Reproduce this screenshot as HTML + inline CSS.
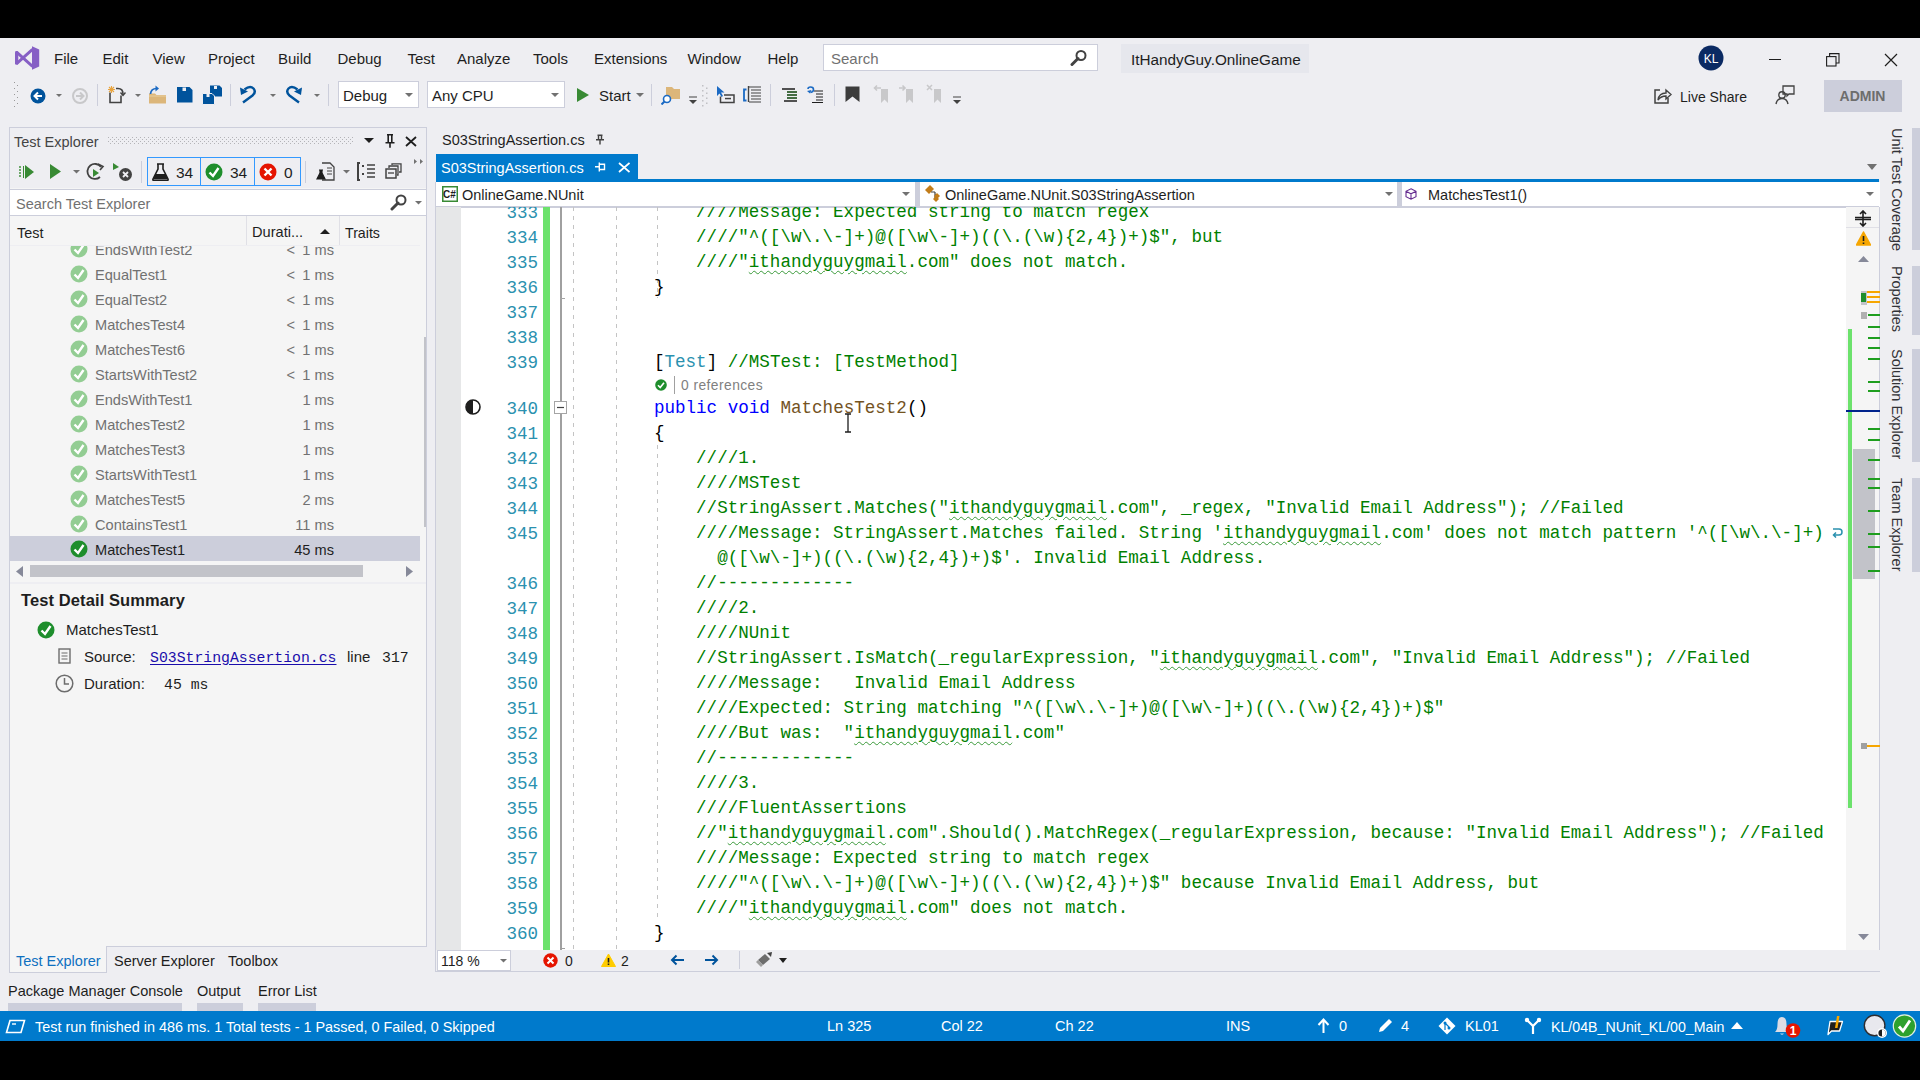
<!DOCTYPE html>
<html><head><meta charset="utf-8"><title>VS</title><style>
*{margin:0;padding:0;box-sizing:content-box}
html,body{width:1920px;height:1080px;overflow:hidden;background:#EEEEF2;position:relative}
.r{position:absolute;display:block}
.t{position:absolute;white-space:pre}
.s{font-family:"Liberation Sans", sans-serif}
.m{font-family:"Liberation Mono", monospace}
.code{font-size:17.57px;line-height:23px}
.sq{text-decoration:underline wavy #3A9A3A;text-decoration-thickness:1px;text-underline-offset:2.5px}
</style></head><body>
<div class="r" style="left:0px;top:0px;width:1920px;height:38px;background:#000;"></div>
<div class="r" style="left:0px;top:38px;width:1920px;height:973px;background:#EEEEF2;"></div>
<div class="r" style="left:0px;top:1011px;width:1920px;height:30px;background:#007ACC;"></div>
<div class="r" style="left:0px;top:1041px;width:1920px;height:39px;background:#000;"></div>
<svg class="r" style="left:15px;top:46px;" width="25" height="24" viewBox="0 0 25 24"><path d="M17 0.3L24.2 3.6V20.4L17 23.7Z" fill="#865FC5"/><rect x="0" y="5" width="3.3" height="13.8" rx="1.4" fill="#865FC5"/><path d="M1.6 6.2L17.5 20.3M1.6 17.6L17.5 3.4" stroke="#865FC5" stroke-width="2.9"/></svg>
<div class="t s" style="left:54px;top:48.80px;font-size:15px;line-height:20px;color:#1E1E1E;font-weight:400;">File</div>
<div class="t s" style="left:102.5px;top:48.80px;font-size:15px;line-height:20px;color:#1E1E1E;font-weight:400;">Edit</div>
<div class="t s" style="left:152.5px;top:48.80px;font-size:15px;line-height:20px;color:#1E1E1E;font-weight:400;">View</div>
<div class="t s" style="left:208px;top:48.80px;font-size:15px;line-height:20px;color:#1E1E1E;font-weight:400;">Project</div>
<div class="t s" style="left:278px;top:48.80px;font-size:15px;line-height:20px;color:#1E1E1E;font-weight:400;">Build</div>
<div class="t s" style="left:337.5px;top:48.80px;font-size:15px;line-height:20px;color:#1E1E1E;font-weight:400;">Debug</div>
<div class="t s" style="left:407.5px;top:48.80px;font-size:15px;line-height:20px;color:#1E1E1E;font-weight:400;">Test</div>
<div class="t s" style="left:457px;top:48.80px;font-size:15px;line-height:20px;color:#1E1E1E;font-weight:400;">Analyze</div>
<div class="t s" style="left:533px;top:48.80px;font-size:15px;line-height:20px;color:#1E1E1E;font-weight:400;">Tools</div>
<div class="t s" style="left:594px;top:48.80px;font-size:15px;line-height:20px;color:#1E1E1E;font-weight:400;">Extensions</div>
<div class="t s" style="left:687.5px;top:48.80px;font-size:15px;line-height:20px;color:#1E1E1E;font-weight:400;">Window</div>
<div class="t s" style="left:767.5px;top:48.80px;font-size:15px;line-height:20px;color:#1E1E1E;font-weight:400;">Help</div>
<div class="r" style="left:823px;top:44px;width:275px;height:27px;background:#FFFFFF;border:1px solid #CCCEDB;box-sizing:border-box;"></div>
<div class="t s" style="left:831px;top:48.80px;font-size:15px;line-height:20px;color:#717171;font-weight:400;">Search</div>
<svg class="r" style="left:1070px;top:49px;" width="18" height="18" viewBox="0 0 18 18"><circle cx="11" cy="6.5" r="4.5" fill="none" stroke="#424242" stroke-width="2"/><path d="M8 9.5 L2 15.5" stroke="#424242" stroke-width="3" stroke-linecap="round"/></svg>
<div class="r" style="left:1121px;top:44px;width:188px;height:29px;background:#E6E7ED;"></div>
<div class="t s" style="left:1131px;top:49.70px;font-size:15.3px;line-height:20px;color:#1E1E1E;font-weight:400;">ItHandyGuy.OnlineGame</div>
<svg class="r" style="left:1698px;top:45px;" width="26" height="26" viewBox="0 0 26 26"><circle cx="13" cy="13" r="12.5" fill="#0B2A63"/><text x="13" y="17.5" font-family="Liberation Sans" font-size="12" fill="#fff" text-anchor="middle">KL</text></svg>
<div class="r" style="left:1769px;top:59px;width:12px;height:1px;background:#1E1E1E;"></div>
<svg class="r" style="left:1826px;top:53px;" width="14" height="14" viewBox="0 0 14 14"><rect x="0.6" y="3.6" width="9.4" height="9.4" fill="none" stroke="#1E1E1E" stroke-width="1.1"/><path d="M3.6 3.6V0.6H13V10H10" fill="none" stroke="#1E1E1E" stroke-width="1.1"/></svg>
<svg class="r" style="left:1884px;top:53px;" width="14" height="14" viewBox="0 0 14 14"><path d="M1 1L13 13M13 1L1 13" stroke="#1E1E1E" stroke-width="1.2"/></svg>
<svg class="r" style="left:14px;top:82px;" width="6" height="26" viewBox="0 0 6 26"><rect x="0" y="0" width="1" height="1" fill="#999"/><rect x="3" y="3" width="1" height="1" fill="#999"/><rect x="0" y="6" width="1" height="1" fill="#999"/><rect x="3" y="9" width="1" height="1" fill="#999"/><rect x="0" y="12" width="1" height="1" fill="#999"/><rect x="3" y="15" width="1" height="1" fill="#999"/><rect x="0" y="18" width="1" height="1" fill="#999"/><rect x="3" y="21" width="1" height="1" fill="#999"/><rect x="0" y="24" width="1" height="1" fill="#999"/></svg>
<svg class="r" style="left:30px;top:88px;" width="16" height="16" viewBox="0 0 16 16"><circle cx="8" cy="8" r="7.5" fill="#00539C"/><path d="M12 8H5M8 4.5L4.5 8L8 11.5" stroke="#fff" stroke-width="2" fill="none"/></svg>
<svg class="r" style="left:56.0px;top:93.5px;" width="6" height="3.0" viewBox="0 0 6 3.0"><path d="M0 0H6L3.0 3.0Z" fill="#717171"/></svg>
<svg class="r" style="left:72px;top:88px;" width="16" height="16" viewBox="0 0 16 16"><circle cx="8" cy="8" r="7" fill="none" stroke="#C8C8CA" stroke-width="2"/><path d="M4 8H11M8 4.5L11.5 8L8 11.5" stroke="#C8C8CA" stroke-width="2" fill="none"/></svg>
<div class="r" style="left:97px;top:84px;width:1px;height:22px;background:#CCCEDB;"></div>
<svg class="r" style="left:107px;top:85px;" width="19" height="19" viewBox="0 0 19 19"><path d="M3 7.5V17.5H14V10.5" fill="none" stroke="#424242" stroke-width="1.6"/><path d="M9 3.5H11Q16 3.5 16 9V10" fill="none" stroke="#424242" stroke-width="1.6"/><path d="M13.5 7.5L16 10.5L18.5 7.5" fill="none" stroke="#424242" stroke-width="1.4"/><path d="M1 4.5H8M4.5 1V8M2 2L7 7M7 2L2 7" stroke="#E8A33D" stroke-width="1.1"/></svg>
<svg class="r" style="left:135.0px;top:93.5px;" width="6" height="3.0" viewBox="0 0 6 3.0"><path d="M0 0H6L3.0 3.0Z" fill="#717171"/></svg>
<svg class="r" style="left:148px;top:85px;" width="19" height="19" viewBox="0 0 19 19"><path d="M1 8.5H7L8.5 10H18V18.5H1Z" fill="#DCB67A"/><path d="M1 11H18" stroke="#E8CFA0" stroke-width="1"/><path d="M2.5 9Q3 3.5 8.5 3.5" fill="none" stroke="#1B6AC4" stroke-width="1.7"/><path d="M7.5 0.5L11 3.5L7.5 6.5Z" fill="#1B6AC4"/></svg>
<svg class="r" style="left:177px;top:87px;" width="16" height="16" viewBox="0 0 16 16"><path d="M0 0H12.5L15.5 3V15.5H0Z" fill="#00539C"/><rect x="5.5" y="0.5" width="3.5" height="3.5" fill="#EEEEF2"/></svg>
<svg class="r" style="left:202px;top:85px;" width="21" height="20" viewBox="0 0 21 20"><path d="M8 0.5H17.5L20 3V11.5H8Z" fill="#00539C"/><rect x="12" y="1" width="3" height="3" fill="#EEEEF2"/><path d="M0.5 8.5H10L12.5 11V19.5H0.5Z" fill="#00539C" stroke="#EEEEF2" stroke-width="1"/><rect x="4.5" y="9" width="3" height="3" fill="#EEEEF2"/></svg>
<div class="r" style="left:230px;top:84px;width:1px;height:22px;background:#CCCEDB;"></div>
<svg class="r" style="left:239px;top:85px;" width="19" height="19" viewBox="0 0 19 19"><path d="M4 17.5L13.5 10.5Q17.5 7 14.5 3.5Q11 0 5.5 4.5" fill="none" stroke="#00539C" stroke-width="2.4"/><path d="M1 2.5L9 6.5L2 10Z" fill="#00539C"/></svg>
<svg class="r" style="left:270.0px;top:93.5px;" width="6" height="3.0" viewBox="0 0 6 3.0"><path d="M0 0H6L3.0 3.0Z" fill="#717171"/></svg>
<svg class="r" style="left:284px;top:85px;" width="19" height="19" viewBox="0 0 19 19"><g transform="translate(19,0) scale(-1,1)"><path d="M4 17.5L13.5 10.5Q17.5 7 14.5 3.5Q11 0 5.5 4.5" fill="none" stroke="#00539C" stroke-width="2.4"/><path d="M1 2.5L9 6.5L2 10Z" fill="#00539C"/></g></svg>
<svg class="r" style="left:314.0px;top:93.5px;" width="6" height="3.0" viewBox="0 0 6 3.0"><path d="M0 0H6L3.0 3.0Z" fill="#717171"/></svg>
<div class="r" style="left:328px;top:84px;width:1px;height:22px;background:#CCCEDB;"></div>
<div class="r" style="left:338px;top:81px;width:81px;height:27px;background:#FFFFFF;border:1px solid #CCCEDB;box-sizing:border-box;"></div>
<div class="t s" style="left:343px;top:85.80px;font-size:15px;line-height:20px;color:#1E1E1E;font-weight:400;">Debug</div>
<svg class="r" style="left:405.0px;top:93.0px;" width="8" height="4.0" viewBox="0 0 8 4.0"><path d="M0 0H8L4.0 4.0Z" fill="#717171"/></svg>
<div class="r" style="left:427px;top:81px;width:138px;height:27px;background:#FFFFFF;border:1px solid #CCCEDB;box-sizing:border-box;"></div>
<div class="t s" style="left:432px;top:85.80px;font-size:15px;line-height:20px;color:#1E1E1E;font-weight:400;">Any CPU</div>
<svg class="r" style="left:551.0px;top:93.0px;" width="8" height="4.0" viewBox="0 0 8 4.0"><path d="M0 0H8L4.0 4.0Z" fill="#717171"/></svg>
<svg class="r" style="left:577px;top:88px;" width="12" height="14" viewBox="0 0 12 14"><path d="M0 0L12 7L0 14Z" fill="#388A34"/></svg>
<div class="t s" style="left:599px;top:85.80px;font-size:15px;line-height:20px;color:#1E1E1E;font-weight:400;">Start</div>
<svg class="r" style="left:636.0px;top:93.0px;" width="8" height="4.0" viewBox="0 0 8 4.0"><path d="M0 0H8L4.0 4.0Z" fill="#717171"/></svg>
<div class="r" style="left:651px;top:84px;width:1px;height:22px;background:#CCCEDB;"></div>
<svg class="r" style="left:661px;top:85px;" width="20" height="20" viewBox="0 0 20 20"><path d="M5 2H11L13 4H19V14H5Z" fill="#DCB67A"/><circle cx="6" cy="14" r="3.5" fill="#fff" stroke="#1B6AC4" stroke-width="1.6"/><path d="M3.5 16.5L0.5 19.5" stroke="#1B6AC4" stroke-width="2"/></svg>
<svg class="r" style="left:688px;top:96px;" width="10" height="10" viewBox="0 0 10 10"><path d="M1 1H9" stroke="#424242"/><path d="M1 4H9L5 8Z" fill="#424242"/></svg>
<svg class="r" style="left:702px;top:84px;" width="7" height="24" viewBox="0 0 7 24"><rect x="0" y="1.0" width="1.5" height="1.5" fill="#C0C0C4"/><rect x="4" y="3.5" width="1.5" height="1.5" fill="#C0C0C4"/><rect x="0" y="6.0" width="1.5" height="1.5" fill="#C0C0C4"/><rect x="4" y="8.5" width="1.5" height="1.5" fill="#C0C0C4"/><rect x="0" y="11.0" width="1.5" height="1.5" fill="#C0C0C4"/><rect x="4" y="13.5" width="1.5" height="1.5" fill="#C0C0C4"/><rect x="0" y="16.0" width="1.5" height="1.5" fill="#C0C0C4"/><rect x="4" y="18.5" width="1.5" height="1.5" fill="#C0C0C4"/><rect x="0" y="21.0" width="1.5" height="1.5" fill="#C0C0C4"/></svg>
<svg class="r" style="left:716px;top:85px;" width="20" height="20" viewBox="0 0 20 20"><path d="M1 1V11L3.5 8.5L5.5 12L7 11L5 7.5H8.5Z" fill="#1B6AC4"/><path d="M4.5 11.5V17.5H18V10H8" fill="none" stroke="#424242" stroke-width="1.5"/><rect x="9" y="12.8" width="6" height="1.5" fill="#424242"/></svg>
<svg class="r" style="left:742px;top:85px;" width="20" height="20" viewBox="0 0 20 20"><path d="M4.5 4.5H2V15.5H4.5" fill="none" stroke="#1B6AC4" stroke-width="1.8"/><path d="M6.5 1V17" stroke="#424242" stroke-width="1.4"/><path d="M7 2H19M9 5H19M9 8H19M9 11H19M9 14H19M7 17H19" stroke="#424242" stroke-width="1.1"/></svg>
<div class="r" style="left:770px;top:84px;width:1px;height:22px;background:#CCCEDB;"></div>
<svg class="r" style="left:781px;top:86px;" width="17" height="17" viewBox="0 0 17 17"><path d="M1 3H14M6 6H16M6 9H16M6 12H16M3 15H16" stroke="#1E1E1E" stroke-width="1.3"/><path d="M6 6H16M6 9H16M6 12H16" stroke="#388A34" stroke-width="1.1"/></svg>
<svg class="r" style="left:806px;top:86px;" width="18" height="17" viewBox="0 0 18 17"><path d="M8 5H17M10 8H17M10 11H17M10 14H17M6 16.5H17" stroke="#1E1E1E" stroke-width="1.2"/><path d="M2 3Q2 1 4.5 1Q7.5 1 7.5 3.5Q7.5 6 4.5 6.5" fill="none" stroke="#1B6AC4" stroke-width="1.6"/><path d="M1 5L4 7.5L5.5 4Z" fill="#1B6AC4"/></svg>
<div class="r" style="left:834px;top:84px;width:1px;height:22px;background:#CCCEDB;"></div>
<svg class="r" style="left:845px;top:86px;" width="15" height="17" viewBox="0 0 15 17"><path d="M0.5 0.5H14.5V16L7.5 10.5L0.5 16Z" fill="#3C3C3C"/></svg>
<svg class="r" style="left:873px;top:84px;" width="16" height="20" viewBox="0 0 16 20"><path d="M8 5H15V19L11.5 15.5L8 19Z" fill="#C8C8CA"/><path d="M8 4H1.5M4 1.5L1.5 4L4 6.5" stroke="#C8C8CA" stroke-width="1.6" fill="none"/></svg>
<svg class="r" style="left:898px;top:84px;" width="16" height="20" viewBox="0 0 16 20"><path d="M8 5H15V19L11.5 15.5L8 19Z" fill="#C8C8CA"/><path d="M1 4H7M4.5 1.5L7 4L4.5 6.5" stroke="#C8C8CA" stroke-width="1.6" fill="none"/></svg>
<svg class="r" style="left:926px;top:84px;" width="16" height="20" viewBox="0 0 16 20"><path d="M8 5H15V19L11.5 15.5L8 19Z" fill="#C8C8CA"/><path d="M1 1L6 6M6 1L1 6" stroke="#C8C8CA" stroke-width="1.5"/></svg>
<svg class="r" style="left:952px;top:96px;" width="10" height="10" viewBox="0 0 10 10"><path d="M1 1H9" stroke="#424242"/><path d="M1 4H9L5 8Z" fill="#424242"/></svg>
<svg class="r" style="left:1653px;top:86px;" width="19" height="19" viewBox="0 0 19 19"><path d="M7 4H2V17H15V12" fill="none" stroke="#424242" stroke-width="1.5"/><path d="M5 14 Q6 7 13 7V4L18 8.5L13 13V10 Q8 10 5 14Z" fill="none" stroke="#424242" stroke-width="1.4"/></svg>
<div class="t s" style="left:1680px;top:88.15px;font-size:14px;line-height:18px;color:#1E1E1E;font-weight:400;">Live Share</div>
<svg class="r" style="left:1775px;top:85px;" width="20" height="20" viewBox="0 0 20 20"><path d="M8 1H19V9H14L12 11V9H8Z" fill="none" stroke="#424242" stroke-width="1.3"/><circle cx="7" cy="10" r="3.2" fill="none" stroke="#424242" stroke-width="1.4"/><path d="M1 19 Q2 13.5 7 13.5 Q12 13.5 13 19" fill="none" stroke="#424242" stroke-width="1.4"/></svg>
<div class="r" style="left:1824px;top:80px;width:78px;height:32px;background:#CCCEDB;"></div>
<div class="t s" style="left:1862.5px;top:87.15px;font-size:14px;line-height:18px;color:#6D6D6D;font-weight:700;transform:translateX(-50%);">ADMIN</div>
<div class="r" style="left:9px;top:127px;width:418px;height:820px;background:#F5F5F5;border:1px solid #CCCEDB;box-sizing:border-box;"></div>
<div class="r" style="left:10px;top:128px;width:416px;height:60px;background:#EEEEF2;"></div>
<div class="t s" style="left:14px;top:132.97px;font-size:14.5px;line-height:19px;color:#444444;font-weight:400;">Test Explorer</div>
<svg class="r" style="left:108px;top:137px;" width="245" height="7" viewBox="0 0 245 7"><defs><pattern id="dg" width="4" height="4" patternUnits="userSpaceOnUse"><rect x="0" y="0" width="1" height="1" fill="#B4B4B8"/><rect x="2" y="2" width="1" height="1" fill="#B4B4B8"/></pattern></defs><rect width="245" height="7" fill="url(#dg)"/></svg>
<svg class="r" style="left:364px;top:138px;" width="10" height="5" viewBox="0 0 10 5"><path d="M0 0H10L5 5Z" fill="#1E1E1E"/></svg>
<svg class="r" style="left:384px;top:133px;" width="12" height="16" viewBox="0 0 12 16"><path d="M3 1.8H9M4.2 1.5V9.5M7.8 1.5V9.5M1.5 9.8H10.5M6 9.5V14.8" stroke="#1E1E1E" stroke-width="1.6" fill="none"/></svg>
<svg class="r" style="left:404.5px;top:135.5px;" width="12" height="11" viewBox="0 0 12 11"><path d="M1 1L11 10M11 1L1 10" stroke="#1E1E1E" stroke-width="1.8"/></svg>
<svg class="r" style="left:19px;top:164px;" width="16" height="16" viewBox="0 0 16 16"><path d="M1 2V14" stroke="#388A34" stroke-width="1.4" stroke-dasharray="2 1"/><path d="M4 2H5V14H4Z" fill="#388A34"/><path d="M6 1L15 8L6 15Z" fill="#388A34"/></svg>
<svg class="r" style="left:50px;top:164px;" width="11" height="15" viewBox="0 0 11 15"><path d="M0 0L11 7.5L0 15Z" fill="#388A34"/></svg>
<svg class="r" style="left:72.5px;top:170.25px;" width="7" height="3.5" viewBox="0 0 7 3.5"><path d="M0 0H7L3.5 3.5Z" fill="#717171"/></svg>
<svg class="r" style="left:86px;top:163px;" width="19" height="18" viewBox="0 0 19 18"><path d="M15 4 A7.5 7.5 0 1 0 14 14" fill="none" stroke="#424242" stroke-width="1.8"/><path d="M12 1L17 3.5L14 7" fill="none" stroke="#424242" stroke-width="1.6"/><path d="M7 6L13 10L7 14Z" fill="#388A34"/></svg>
<svg class="r" style="left:113px;top:163px;" width="20" height="19" viewBox="0 0 20 19"><path d="M0 0L6 4L0 7Z" fill="#388A34"/><circle cx="12.5" cy="11.5" r="6.5" fill="#424242"/><path d="M10 9L15 14M15 9L10 14" stroke="#EEEEF2" stroke-width="1.8"/></svg>
<div class="r" style="left:141px;top:161px;width:1px;height:22px;background:#CCCEDB;"></div>
<div class="r" style="left:147px;top:157px;width:154px;height:29px;background:#EEEEF2;border:1px solid #3399FF;box-sizing:border-box;"></div>
<div class="r" style="left:200px;top:158px;width:1px;height:27px;background:#3399FF;"></div>
<div class="r" style="left:254px;top:158px;width:1px;height:27px;background:#3399FF;"></div>
<svg class="r" style="left:152px;top:163px;" width="17" height="18" viewBox="0 0 17 18"><path d="M5 1H12M6 1V6L1 16Q0.5 17.5 2 17.5H15Q16.5 17.5 16 16L11 6V1" fill="none" stroke="#1E1E1E" stroke-width="1.6"/><path d="M3.5 11H13.5L16 16.5H1Z" fill="#1E1E1E"/></svg>
<div class="t s" style="left:176px;top:162.63px;font-size:15.5px;line-height:20px;color:#1E1E1E;font-weight:400;">34</div>
<svg class="r" style="left:205px;top:163px;" width="18" height="18" viewBox="0 0 18 18"><circle cx="9" cy="9" r="8.5" fill="#1E8E2C"/><path d="M4.5 9.5L8 13L13.5 5" fill="none" stroke="#fff" stroke-width="2.4"/></svg>
<div class="t s" style="left:230px;top:162.63px;font-size:15.5px;line-height:20px;color:#1E1E1E;font-weight:400;">34</div>
<svg class="r" style="left:259px;top:163px;" width="18" height="18" viewBox="0 0 18 18"><circle cx="9" cy="9" r="8.5" fill="#E51400"/><path d="M5.5 5.5L12.5 12.5M12.5 5.5L5.5 12.5" stroke="#fff" stroke-width="2.4"/></svg>
<div class="t s" style="left:284px;top:162.63px;font-size:15.5px;line-height:20px;color:#1E1E1E;font-weight:400;">0</div>
<div class="r" style="left:305px;top:161px;width:1px;height:22px;background:#CCCEDB;"></div>
<svg class="r" style="left:316px;top:162px;" width="19" height="19" viewBox="0 0 19 19"><path d="M6 1H14L18 5V18H6" fill="none" stroke="#424242" stroke-width="1.3"/><path d="M11 6H16M11 9H16M11 12H16" stroke="#424242" stroke-width="1.2"/><path d="M3 8H7M4 8V11L1 17H9L6 11V8" fill="#1E1E1E" stroke="#1E1E1E" stroke-width="1.2"/></svg>
<svg class="r" style="left:342.5px;top:170.25px;" width="7" height="3.5" viewBox="0 0 7 3.5"><path d="M0 0H7L3.5 3.5Z" fill="#717171"/></svg>
<svg class="r" style="left:357px;top:162px;" width="19" height="19" viewBox="0 0 19 19"><path d="M3 1H1V18H3" fill="none" stroke="#424242" stroke-width="2"/><path d="M5 4H7M5 12H7" stroke="#424242" stroke-width="2"/><path d="M10 3H18M10 7H18M10 11H18M10 15H18" stroke="#424242" stroke-width="1.6"/></svg>
<svg class="r" style="left:385px;top:163px;" width="17" height="16" viewBox="0 0 17 16"><rect x="1" y="6" width="10" height="9" fill="none" stroke="#424242" stroke-width="1.5"/><path d="M4 5V3H13V12H12M7 2V0.8H16V9H14" fill="none" stroke="#424242" stroke-width="1.3"/><path d="M3 10H9" stroke="#424242" stroke-width="1.3"/></svg>
<svg class="r" style="left:414px;top:159px;" width="9" height="6" viewBox="0 0 9 6"><path d="M0 0L3 2.5L0 5ZM6 0L9 2.5L6 5Z" fill="#717171"/></svg>
<div class="r" style="left:10px;top:189px;width:416px;height:27px;background:#FFFFFF;border-top:1px solid #CCCEDB;border-bottom:1px solid #CCCEDB;box-sizing:border-box;"></div>
<div class="t s" style="left:16px;top:194.97px;font-size:14.5px;line-height:19px;color:#717171;font-weight:400;">Search Test Explorer</div>
<svg class="r" style="left:390px;top:193px;" width="18" height="18" viewBox="0 0 18 18"><circle cx="11" cy="7" r="4.5" fill="none" stroke="#424242" stroke-width="2"/><path d="M8 10 L2 16" stroke="#424242" stroke-width="3" stroke-linecap="round"/></svg>
<svg class="r" style="left:414.5px;top:201.25px;" width="7" height="3.5" viewBox="0 0 7 3.5"><path d="M0 0H7L3.5 3.5Z" fill="#717171"/></svg>
<div class="r" style="left:10px;top:216px;width:416px;height:29px;background:#F5F5F5;"></div>
<div class="t s" style="left:17px;top:223.51px;font-size:14.4px;line-height:19px;color:#1E1E1E;font-weight:400;">Test</div>
<div class="r" style="left:246px;top:216px;width:1px;height:29px;background:#E0E0E6;"></div>
<div class="t s" style="left:252px;top:223.44px;font-size:14.6px;line-height:19px;color:#1E1E1E;font-weight:400;">Durati...</div>
<svg class="r" style="left:320px;top:229px;" width="10" height="5" viewBox="0 0 10 5"><path d="M0 5L5 0L10 5Z" fill="#1E1E1E"/></svg>
<div class="r" style="left:339px;top:216px;width:1px;height:29px;background:#E0E0E6;"></div>
<div class="t s" style="left:345px;top:224.08px;font-size:14.2px;line-height:18px;color:#1E1E1E;font-weight:400;">Traits</div>
<div class="r" style="left:10px;top:245px;width:410px;height:1px;background:#EEEEF2;"></div>
<div class="r" style="left:10px;top:246px;width:410px;height:316px;overflow:hidden;">
<svg class="r" style="left:60px;top:-6px" width="18" height="18"><circle cx="9" cy="9" r="8.5" fill="#93CD93"/><path d="M4.5 9.5L8 13L13.5 5" fill="none" stroke="#fff" stroke-width="2.4"/></svg>
<div class="t s" style="left:85px;top:-6.06px;font-size:14.6px;line-height:20px;color:#717171">EndsWithTest2</div>
<div class="t s" style="right:86px;top:-6.06px;font-size:14.6px;line-height:20px;color:#717171">&lt; 1 ms</div>
<svg class="r" style="left:60px;top:19px" width="18" height="18"><circle cx="9" cy="9" r="8.5" fill="#93CD93"/><path d="M4.5 9.5L8 13L13.5 5" fill="none" stroke="#fff" stroke-width="2.4"/></svg>
<div class="t s" style="left:85px;top:18.94px;font-size:14.6px;line-height:20px;color:#717171">EqualTest1</div>
<div class="t s" style="right:86px;top:18.94px;font-size:14.6px;line-height:20px;color:#717171">&lt; 1 ms</div>
<svg class="r" style="left:60px;top:44px" width="18" height="18"><circle cx="9" cy="9" r="8.5" fill="#93CD93"/><path d="M4.5 9.5L8 13L13.5 5" fill="none" stroke="#fff" stroke-width="2.4"/></svg>
<div class="t s" style="left:85px;top:43.94px;font-size:14.6px;line-height:20px;color:#717171">EqualTest2</div>
<div class="t s" style="right:86px;top:43.94px;font-size:14.6px;line-height:20px;color:#717171">&lt; 1 ms</div>
<svg class="r" style="left:60px;top:69px" width="18" height="18"><circle cx="9" cy="9" r="8.5" fill="#93CD93"/><path d="M4.5 9.5L8 13L13.5 5" fill="none" stroke="#fff" stroke-width="2.4"/></svg>
<div class="t s" style="left:85px;top:68.94px;font-size:14.6px;line-height:20px;color:#717171">MatchesTest4</div>
<div class="t s" style="right:86px;top:68.94px;font-size:14.6px;line-height:20px;color:#717171">&lt; 1 ms</div>
<svg class="r" style="left:60px;top:94px" width="18" height="18"><circle cx="9" cy="9" r="8.5" fill="#93CD93"/><path d="M4.5 9.5L8 13L13.5 5" fill="none" stroke="#fff" stroke-width="2.4"/></svg>
<div class="t s" style="left:85px;top:93.94px;font-size:14.6px;line-height:20px;color:#717171">MatchesTest6</div>
<div class="t s" style="right:86px;top:93.94px;font-size:14.6px;line-height:20px;color:#717171">&lt; 1 ms</div>
<svg class="r" style="left:60px;top:119px" width="18" height="18"><circle cx="9" cy="9" r="8.5" fill="#93CD93"/><path d="M4.5 9.5L8 13L13.5 5" fill="none" stroke="#fff" stroke-width="2.4"/></svg>
<div class="t s" style="left:85px;top:118.94px;font-size:14.6px;line-height:20px;color:#717171">StartsWithTest2</div>
<div class="t s" style="right:86px;top:118.94px;font-size:14.6px;line-height:20px;color:#717171">&lt; 1 ms</div>
<svg class="r" style="left:60px;top:144px" width="18" height="18"><circle cx="9" cy="9" r="8.5" fill="#93CD93"/><path d="M4.5 9.5L8 13L13.5 5" fill="none" stroke="#fff" stroke-width="2.4"/></svg>
<div class="t s" style="left:85px;top:143.94px;font-size:14.6px;line-height:20px;color:#717171">EndsWithTest1</div>
<div class="t s" style="right:86px;top:143.94px;font-size:14.6px;line-height:20px;color:#717171">1 ms</div>
<svg class="r" style="left:60px;top:169px" width="18" height="18"><circle cx="9" cy="9" r="8.5" fill="#93CD93"/><path d="M4.5 9.5L8 13L13.5 5" fill="none" stroke="#fff" stroke-width="2.4"/></svg>
<div class="t s" style="left:85px;top:168.94px;font-size:14.6px;line-height:20px;color:#717171">MatchesTest2</div>
<div class="t s" style="right:86px;top:168.94px;font-size:14.6px;line-height:20px;color:#717171">1 ms</div>
<svg class="r" style="left:60px;top:194px" width="18" height="18"><circle cx="9" cy="9" r="8.5" fill="#93CD93"/><path d="M4.5 9.5L8 13L13.5 5" fill="none" stroke="#fff" stroke-width="2.4"/></svg>
<div class="t s" style="left:85px;top:193.94px;font-size:14.6px;line-height:20px;color:#717171">MatchesTest3</div>
<div class="t s" style="right:86px;top:193.94px;font-size:14.6px;line-height:20px;color:#717171">1 ms</div>
<svg class="r" style="left:60px;top:219px" width="18" height="18"><circle cx="9" cy="9" r="8.5" fill="#93CD93"/><path d="M4.5 9.5L8 13L13.5 5" fill="none" stroke="#fff" stroke-width="2.4"/></svg>
<div class="t s" style="left:85px;top:218.94px;font-size:14.6px;line-height:20px;color:#717171">StartsWithTest1</div>
<div class="t s" style="right:86px;top:218.94px;font-size:14.6px;line-height:20px;color:#717171">1 ms</div>
<svg class="r" style="left:60px;top:244px" width="18" height="18"><circle cx="9" cy="9" r="8.5" fill="#93CD93"/><path d="M4.5 9.5L8 13L13.5 5" fill="none" stroke="#fff" stroke-width="2.4"/></svg>
<div class="t s" style="left:85px;top:243.94px;font-size:14.6px;line-height:20px;color:#717171">MatchesTest5</div>
<div class="t s" style="right:86px;top:243.94px;font-size:14.6px;line-height:20px;color:#717171">2 ms</div>
<svg class="r" style="left:60px;top:269px" width="18" height="18"><circle cx="9" cy="9" r="8.5" fill="#93CD93"/><path d="M4.5 9.5L8 13L13.5 5" fill="none" stroke="#fff" stroke-width="2.4"/></svg>
<div class="t s" style="left:85px;top:268.94px;font-size:14.6px;line-height:20px;color:#717171">ContainsTest1</div>
<div class="t s" style="right:86px;top:268.94px;font-size:14.6px;line-height:20px;color:#717171">11 ms</div>
<div class="r" style="left:0;top:290px;width:410px;height:25px;background:#CCCEDB"></div>
<svg class="r" style="left:60px;top:294px" width="18" height="18"><circle cx="9" cy="9" r="8.5" fill="#1E8E2C"/><path d="M4.5 9.5L8 13L13.5 5" fill="none" stroke="#fff" stroke-width="2.4"/></svg>
<div class="t s" style="left:85px;top:293.94px;font-size:14.6px;line-height:20px;color:#1E1E1E">MatchesTest1</div>
<div class="t s" style="right:86px;top:293.94px;font-size:14.6px;line-height:20px;color:#1E1E1E">45 ms</div>
</div>
<div class="r" style="left:424px;top:337px;width:2px;height:190px;background:#C2C3C9;"></div>
<div class="r" style="left:10px;top:562px;width:416px;height:20px;background:#F5F5F5;"></div>
<svg class="r" style="left:16px;top:566px;" width="7" height="11" viewBox="0 0 7 11"><path d="M7 0V11L0 5.5Z" fill="#868999"/></svg>
<div class="r" style="left:30px;top:565px;width:333px;height:12px;background:#C2C3C9;"></div>
<svg class="r" style="left:406px;top:566px;" width="7" height="11" viewBox="0 0 7 11"><path d="M0 0V11L7 5.5Z" fill="#868999"/></svg>
<div class="r" style="left:10px;top:582px;width:416px;height:2px;background:#EEEEF2;"></div>
<div class="t s" style="left:21px;top:589.78px;font-size:16.5px;line-height:21px;color:#1E1E1E;font-weight:700;letter-spacing:0.1px;">Test Detail Summary</div>
<svg class="r" style="left:37px;top:621px;" width="18" height="18" viewBox="0 0 18 18"><circle cx="9" cy="9" r="8.5" fill="#1E8E2C"/><path d="M4.5 9.5L8 13L13.5 5" fill="none" stroke="#fff" stroke-width="2.4"/></svg>
<div class="t s" style="left:66px;top:619.80px;font-size:15px;line-height:20px;color:#1E1E1E;font-weight:400;">MatchesTest1</div>
<svg class="r" style="left:58px;top:648px;" width="13" height="16" viewBox="0 0 13 16"><rect x="1" y="1" width="11" height="14" fill="none" stroke="#6D6D6D" stroke-width="1.4"/><path d="M3.5 5H9.5M3.5 8H9.5M3.5 11H9.5" stroke="#6D6D6D" stroke-width="1.2"/></svg>
<div class="t s" style="left:84px;top:646.80px;font-size:15px;line-height:20px;color:#1E1E1E;font-weight:400;">Source:</div>
<div class="t m" style="left:150px;top:648.56px;font-size:14.8px;line-height:19px;color:#1A0DAB;font-weight:400;text-decoration:underline;text-underline-offset:2px;">S03StringAssertion.cs</div>
<div class="t s" style="left:347px;top:646.80px;font-size:15px;line-height:20px;color:#1E1E1E;font-weight:400;">line</div>
<div class="t m" style="left:382px;top:648.56px;font-size:14.8px;line-height:19px;color:#1E1E1E;font-weight:400;">317</div>
<svg class="r" style="left:55px;top:674px;" width="19" height="19" viewBox="0 0 19 19"><circle cx="9.5" cy="9.5" r="8.3" fill="none" stroke="#6D6D6D" stroke-width="1.5"/><path d="M9.5 4V10H14" fill="none" stroke="#6D6D6D" stroke-width="1.5"/></svg>
<div class="t s" style="left:84px;top:673.80px;font-size:15px;line-height:20px;color:#1E1E1E;font-weight:400;">Duration:</div>
<div class="t m" style="left:164px;top:675.56px;font-size:14.8px;line-height:19px;color:#1E1E1E;font-weight:400;">45 ms</div>
<div class="r" style="left:9px;top:946px;width:418px;height:1px;background:#CCCEDB;"></div>
<div class="r" style="left:9px;top:946px;width:98px;height:27px;background:#F5F5F5;border:1px solid #CCCEDB;border-top:none;box-sizing:border-box;"></div>
<div class="t s" style="left:16px;top:951.97px;font-size:14.5px;line-height:19px;color:#0E70C0;font-weight:400;">Test Explorer</div>
<div class="t s" style="left:114px;top:951.97px;font-size:14.5px;line-height:19px;color:#1E1E1E;font-weight:400;">Server Explorer</div>
<div class="t s" style="left:228px;top:951.97px;font-size:14.5px;line-height:19px;color:#1E1E1E;font-weight:400;">Toolbox</div>
<div class="t s" style="left:8px;top:981.97px;font-size:14.5px;line-height:19px;color:#1E1E1E;font-weight:400;">Package Manager Console</div>
<div class="r" style="left:8px;top:1003px;width:174px;height:8px;background:#CCCEDB;"></div>
<div class="t s" style="left:197px;top:981.97px;font-size:14.5px;line-height:19px;color:#1E1E1E;font-weight:400;">Output</div>
<div class="r" style="left:197px;top:1003px;width:46px;height:8px;background:#CCCEDB;"></div>
<div class="t s" style="left:258px;top:981.97px;font-size:14.5px;line-height:19px;color:#1E1E1E;font-weight:400;">Error List</div>
<div class="r" style="left:258px;top:1003px;width:58px;height:8px;background:#CCCEDB;"></div>
<div class="t s" style="left:442px;top:131.47px;font-size:14.5px;line-height:19px;color:#1E1E1E;font-weight:400;">S03StringAssertion.cs</div>
<svg class="r" style="left:595px;top:134px;" width="10" height="11" viewBox="0 0 10 11"><path d="M2.5 1.2H7.5M3.5 1V5.5M6.5 1V5.5M1 5.8H9M5 5.5V10.5" stroke="#424242" stroke-width="1.4" fill="none"/></svg>
<div class="r" style="left:436px;top:154px;width:202px;height:26px;background:#007ACC;"></div>
<div class="t s" style="left:441px;top:159.47px;font-size:14.5px;line-height:19px;color:#FFFFFF;font-weight:400;">S03StringAssertion.cs</div>
<svg class="r" style="left:594px;top:162px;" width="12" height="10" viewBox="0 0 12 10"><path d="M1 4.8H5.5M5.3 0.5V9.5M5.5 2.2H10.5V7.5H5.5" stroke="#fff" stroke-width="1.4" fill="none"/></svg>
<svg class="r" style="left:617.5px;top:161.5px;" width="12.5" height="11" viewBox="0 0 12.5 11"><path d="M1 1L11.5 10M11.5 1L1 10" stroke="#fff" stroke-width="1.7"/></svg>
<div class="r" style="left:436px;top:179px;width:1443px;height:2.5px;background:#007ACC;"></div>
<svg class="r" style="left:1867px;top:164px;" width="10" height="6" viewBox="0 0 10 6"><path d="M0 0H10L5 6Z" fill="#717171"/></svg>
<div class="r" style="left:436px;top:182px;width:1444px;height:768px;background:#FFFFFF;"></div>
<div class="r" style="left:436px;top:181.5px;width:1443px;height:26px;background:#FFFFFF;border-bottom:2px solid #CCCEDB;box-sizing:border-box;"></div>
<svg class="r" style="left:442px;top:186px;" width="16" height="16" viewBox="0 0 16 16"><rect x="0.75" y="0.75" width="14.5" height="14.5" fill="#fff" stroke="#388A34" stroke-width="1.5"/><text x="7.5" y="12" font-family="Liberation Sans" font-size="10" font-weight="700" fill="#1E1E1E" text-anchor="middle">C#</text></svg>
<div class="t s" style="left:462px;top:186.22px;font-size:14.5px;line-height:19px;color:#1E1E1E;font-weight:400;">OnlineGame.NUnit</div>
<svg class="r" style="left:902.0px;top:192.0px;" width="8" height="4.0" viewBox="0 0 8 4.0"><path d="M0 0H8L4.0 4.0Z" fill="#717171"/></svg>
<div class="r" style="left:915px;top:182px;width:5px;height:24px;background:#CCCEDB;"></div>
<svg class="r" style="left:925px;top:185px;" width="17" height="17" viewBox="0 0 17 17"><path d="M0 5L5 0L9 4L4 9Z" fill="#C27D1A"/><path d="M6 7H10M10 7V13H13M10 10H13" stroke="#424242" stroke-width="1.2" fill="none"/><path d="M12 8L15 11L12 14L9 11Z" fill="#C27D1A"/><path d="M11 13L14 16L11 19L8 16Z" fill="#C27D1A" transform="translate(0,-2)"/></svg>
<div class="t s" style="left:945px;top:186.22px;font-size:14.5px;line-height:19px;color:#1E1E1E;font-weight:400;">OnlineGame.NUnit.S03StringAssertion</div>
<svg class="r" style="left:1385.0px;top:192.0px;" width="8" height="4.0" viewBox="0 0 8 4.0"><path d="M0 0H8L4.0 4.0Z" fill="#717171"/></svg>
<div class="r" style="left:1397px;top:182px;width:5px;height:24px;background:#CCCEDB;"></div>
<svg class="r" style="left:1405px;top:188px;" width="12" height="12" viewBox="0 0 12 12"><path d="M6 0.8L11 3.3V8.7L6 11.2L1 8.7V3.3Z M1 3.3L6 5.8L11 3.3M6 5.8V11.2" fill="none" stroke="#652D90" stroke-width="1.1"/></svg>
<div class="t s" style="left:1428px;top:186.22px;font-size:14.5px;line-height:19px;color:#1E1E1E;font-weight:400;">MatchesTest1()</div>
<svg class="r" style="left:1866.0px;top:192.0px;" width="8" height="4.0" viewBox="0 0 8 4.0"><path d="M0 0H8L4.0 4.0Z" fill="#717171"/></svg>
<div class="r" style="left:435px;top:182px;width:1px;height:790px;background:#CCCEDB;"></div>
<div class="r" style="left:436px;top:207px;width:25px;height:743px;background:#E6E7E8;"></div>
<div class="r" style="left:543px;top:207px;width:7px;height:743px;background:#6CE26C;"></div>
<div class="r" style="left:560px;top:207px;width:1.5px;height:743px;background:#A0A0A0;"></div>
<div class="r" style="left:560px;top:298px;width:5px;height:1px;background:#A5A5A5;"></div>
<div class="r" style="left:560px;top:948px;width:5px;height:1px;background:#A0A0A0;"></div>
<div class="r" style="left:573px;top:207px;width:1px;height:743px;background:repeating-linear-gradient(to bottom,#C4C4C4 0 4px,transparent 4px 9px)"></div>
<div class="r" style="left:616px;top:207px;width:1px;height:743px;background:repeating-linear-gradient(to bottom,#C4C4C4 0 4px,transparent 4px 9px)"></div>
<div class="r" style="left:657px;top:207px;width:1px;height:91px;background:repeating-linear-gradient(to bottom,#C4C4C4 0 4px,transparent 4px 9px)"></div>
<div class="r" style="left:657px;top:445px;width:1px;height:477px;background:repeating-linear-gradient(to bottom,#C4C4C4 0 4px,transparent 4px 9px)"></div>
<svg class="r" style="left:465px;top:399px;" width="16" height="16" viewBox="0 0 16 16"><circle cx="8" cy="8" r="7" fill="#fff" stroke="#1E1E1E" stroke-width="1.6"/><path d="M8 1A7 7 0 0 0 8 15Z" fill="#1E1E1E"/></svg>
<svg class="r" style="left:554px;top:401px;" width="13" height="13" viewBox="0 0 13 13"><rect x="0.5" y="0.5" width="12" height="12" fill="#fff" stroke="#A5A5A5"/><path d="M3 6.5H10" stroke="#424242" stroke-width="1.2"/></svg>
<div class="r" style="left:436px;top:207px;width:1410px;height:743px;overflow:hidden">
<div class="t m" style="left:102px;top:-5.18px;font-size:17.57px;line-height:23px;color:#2B91AF;font-weight:400;transform:translateX(-100%);">333</div>
<div class="t m code" style="left:133.60000000000002px;top:-6.18px;color:#008000">            ////Message: Expected string to match regex</div>
<div class="t m" style="left:102px;top:19.82px;font-size:17.57px;line-height:23px;color:#2B91AF;font-weight:400;transform:translateX(-100%);">334</div>
<div class="t m code" style="left:133.60000000000002px;top:18.82px;color:#008000">            ////&quot;^([\w\.\-]+)@([\w\-]+)((\.(\w){2,4})+)$&quot;, but</div>
<div class="t m" style="left:102px;top:44.82px;font-size:17.57px;line-height:23px;color:#2B91AF;font-weight:400;transform:translateX(-100%);">335</div>
<div class="t m code" style="left:133.60000000000002px;top:43.82px;color:#008000">            ////&quot;<span class="sq">ithandyguygmail</span>.com&quot; does not match.</div>
<div class="t m" style="left:102px;top:69.82px;font-size:17.57px;line-height:23px;color:#2B91AF;font-weight:400;transform:translateX(-100%);">336</div>
<div class="t m code" style="left:133.60000000000002px;top:68.82px;color:#000000">        }</div>
<div class="t m" style="left:102px;top:94.82px;font-size:17.57px;line-height:23px;color:#2B91AF;font-weight:400;transform:translateX(-100%);">337</div>
<div class="t m" style="left:102px;top:119.82px;font-size:17.57px;line-height:23px;color:#2B91AF;font-weight:400;transform:translateX(-100%);">338</div>
<div class="t m" style="left:102px;top:144.82px;font-size:17.57px;line-height:23px;color:#2B91AF;font-weight:400;transform:translateX(-100%);">339</div>
<div class="t m code" style="left:133.60000000000002px;top:143.82px;color:#000000">        [<span style="color:#2B91AF">Test</span>] <span style="color:#008000">//MSTest: [TestMethod]</span></div>
<div class="t m" style="left:102px;top:190.82px;font-size:17.57px;line-height:23px;color:#2B91AF;font-weight:400;transform:translateX(-100%);">340</div>
<div class="t m code" style="left:133.60000000000002px;top:189.82px;color:#000000">        <span style="color:#0000FF">public</span> <span style="color:#0000FF">void</span> <span style="color:#74531F">MatchesTest2</span>()</div>
<div class="t m" style="left:102px;top:215.82px;font-size:17.57px;line-height:23px;color:#2B91AF;font-weight:400;transform:translateX(-100%);">341</div>
<div class="t m code" style="left:133.60000000000002px;top:214.82px;color:#000000">        {</div>
<div class="t m" style="left:102px;top:240.82px;font-size:17.57px;line-height:23px;color:#2B91AF;font-weight:400;transform:translateX(-100%);">342</div>
<div class="t m code" style="left:133.60000000000002px;top:239.82px;color:#008000">            ////1.</div>
<div class="t m" style="left:102px;top:265.82px;font-size:17.57px;line-height:23px;color:#2B91AF;font-weight:400;transform:translateX(-100%);">343</div>
<div class="t m code" style="left:133.60000000000002px;top:264.82px;color:#008000">            ////MSTest</div>
<div class="t m" style="left:102px;top:290.82px;font-size:17.57px;line-height:23px;color:#2B91AF;font-weight:400;transform:translateX(-100%);">344</div>
<div class="t m code" style="left:133.60000000000002px;top:289.82px;color:#008000">            //StringAssert.Matches(&quot;<span class="sq">ithandyguygmail</span>.com&quot;, _regex, &quot;Invalid Email Address&quot;); //Failed</div>
<div class="t m" style="left:102px;top:315.82px;font-size:17.57px;line-height:23px;color:#2B91AF;font-weight:400;transform:translateX(-100%);">345</div>
<div class="t m code" style="left:133.60000000000002px;top:314.82px;color:#008000">            ////Message: StringAssert.Matches failed. String &#x27;<span class="sq">ithandyguygmail</span>.com&#x27; does not match pattern &#x27;^([\w\.\-]+)</div>
<div class="t m" style="left:102px;top:365.82px;font-size:17.57px;line-height:23px;color:#2B91AF;font-weight:400;transform:translateX(-100%);">346</div>
<div class="t m code" style="left:133.60000000000002px;top:364.82px;color:#008000">            //-------------</div>
<div class="t m" style="left:102px;top:390.82px;font-size:17.57px;line-height:23px;color:#2B91AF;font-weight:400;transform:translateX(-100%);">347</div>
<div class="t m code" style="left:133.60000000000002px;top:389.82px;color:#008000">            ////2.</div>
<div class="t m" style="left:102px;top:415.82px;font-size:17.57px;line-height:23px;color:#2B91AF;font-weight:400;transform:translateX(-100%);">348</div>
<div class="t m code" style="left:133.60000000000002px;top:414.82px;color:#008000">            ////NUnit</div>
<div class="t m" style="left:102px;top:440.82px;font-size:17.57px;line-height:23px;color:#2B91AF;font-weight:400;transform:translateX(-100%);">349</div>
<div class="t m code" style="left:133.60000000000002px;top:439.82px;color:#008000">            //StringAssert.IsMatch(_regularExpression, &quot;<span class="sq">ithandyguygmail</span>.com&quot;, &quot;Invalid Email Address&quot;); //Failed</div>
<div class="t m" style="left:102px;top:465.82px;font-size:17.57px;line-height:23px;color:#2B91AF;font-weight:400;transform:translateX(-100%);">350</div>
<div class="t m code" style="left:133.60000000000002px;top:464.82px;color:#008000">            ////Message:   Invalid Email Address</div>
<div class="t m" style="left:102px;top:490.82px;font-size:17.57px;line-height:23px;color:#2B91AF;font-weight:400;transform:translateX(-100%);">351</div>
<div class="t m code" style="left:133.60000000000002px;top:489.82px;color:#008000">            ////Expected: String matching &quot;^([\w\.\-]+)@([\w\-]+)((\.(\w){2,4})+)$&quot;</div>
<div class="t m" style="left:102px;top:515.82px;font-size:17.57px;line-height:23px;color:#2B91AF;font-weight:400;transform:translateX(-100%);">352</div>
<div class="t m code" style="left:133.60000000000002px;top:514.82px;color:#008000">            ////But was:  &quot;<span class="sq">ithandyguygmail</span>.com&quot;</div>
<div class="t m" style="left:102px;top:540.82px;font-size:17.57px;line-height:23px;color:#2B91AF;font-weight:400;transform:translateX(-100%);">353</div>
<div class="t m code" style="left:133.60000000000002px;top:539.82px;color:#008000">            //-------------</div>
<div class="t m" style="left:102px;top:565.82px;font-size:17.57px;line-height:23px;color:#2B91AF;font-weight:400;transform:translateX(-100%);">354</div>
<div class="t m code" style="left:133.60000000000002px;top:564.82px;color:#008000">            ////3.</div>
<div class="t m" style="left:102px;top:590.82px;font-size:17.57px;line-height:23px;color:#2B91AF;font-weight:400;transform:translateX(-100%);">355</div>
<div class="t m code" style="left:133.60000000000002px;top:589.82px;color:#008000">            ////FluentAssertions</div>
<div class="t m" style="left:102px;top:615.82px;font-size:17.57px;line-height:23px;color:#2B91AF;font-weight:400;transform:translateX(-100%);">356</div>
<div class="t m code" style="left:133.60000000000002px;top:614.82px;color:#008000">            //&quot;<span class="sq">ithandyguygmail</span>.com&quot;.Should().MatchRegex(_regularExpression, because: &quot;Invalid Email Address&quot;); //Failed</div>
<div class="t m" style="left:102px;top:640.82px;font-size:17.57px;line-height:23px;color:#2B91AF;font-weight:400;transform:translateX(-100%);">357</div>
<div class="t m code" style="left:133.60000000000002px;top:639.82px;color:#008000">            ////Message: Expected string to match regex</div>
<div class="t m" style="left:102px;top:665.82px;font-size:17.57px;line-height:23px;color:#2B91AF;font-weight:400;transform:translateX(-100%);">358</div>
<div class="t m code" style="left:133.60000000000002px;top:664.82px;color:#008000">            ////&quot;^([\w\.\-]+)@([\w\-]+)((\.(\w){2,4})+)$&quot; because Invalid Email Address, but</div>
<div class="t m" style="left:102px;top:690.82px;font-size:17.57px;line-height:23px;color:#2B91AF;font-weight:400;transform:translateX(-100%);">359</div>
<div class="t m code" style="left:133.60000000000002px;top:689.82px;color:#008000">            ////&quot;<span class="sq">ithandyguygmail</span>.com&quot; does not match.</div>
<div class="t m" style="left:102px;top:715.82px;font-size:17.57px;line-height:23px;color:#2B91AF;font-weight:400;transform:translateX(-100%);">360</div>
<div class="t m code" style="left:133.60000000000002px;top:714.82px;color:#000000">        }</div>
<div class="t m code" style="left:133.60000000000002px;top:339.82px;color:#008000">              @([\w\-]+)((\.(\w){2,4})+)$'. Invalid Email Address.</div>
<svg class="r" style="left:1395px;top:319px" width="12" height="12"><path d="M2 3H8A3 3 0 0 1 8 9H3M5 6.5L2.5 9L5 11.5" fill="none" stroke="#2B91AF" stroke-width="1.5"/></svg>
<svg class="r" style="left:219px;top:172px" width="12" height="12"><circle cx="6" cy="6" r="5.8" fill="#1E8E2C"/><path d="M3 6.3L5.2 8.5L9 3.8" fill="none" stroke="#fff" stroke-width="1.6"/></svg>
<div class="r" style="left:238px;top:169px;width:1px;height:18px;background:#A0A0A0"></div>
<div class="t s" style="left:245px;top:170.22px;font-size:13.8px;line-height:18px;color:#808080;font-weight:400;letter-spacing:0.45px;">0 references</div>
<svg class="r" style="left:407px;top:206px" width="10" height="20"><path d="M2 1H8M5 1V19M2 19H8" stroke="#1E1E1E" stroke-width="1.3" fill="none"/></svg>
</div>
<div class="r" style="left:1846px;top:207px;width:34px;height:743px;background:#F5F5F5;"></div>
<div class="r" style="left:1846px;top:207px;width:34px;height:21px;background:#F5F5F5;border-bottom:1px solid #E0E0E6;box-sizing:border-box;"></div>
<div class="r" style="left:1879px;top:207px;width:1px;height:765px;background:#CCCEDB;"></div>
<svg class="r" style="left:1854px;top:210px;" width="18" height="17" viewBox="0 0 18 17"><path d="M1 7.5H17M1 9.5H17" stroke="#1E1E1E" stroke-width="1.3"/><path d="M9 1V16M6 4L9 1L12 4M6 13L9 16L12 13" fill="none" stroke="#1E1E1E" stroke-width="1.6"/></svg>
<svg class="r" style="left:1856px;top:231px;" width="15" height="15" viewBox="0 0 15 15"><path d="M7.5 1L14.5 14H0.5Z" fill="#F6A600" stroke="#F6A600" stroke-linejoin="round" stroke-width="1.5"/><path d="M7.5 5V10M7.5 11.5V13" stroke="#1E1E1E" stroke-width="1.6"/></svg>
<svg class="r" style="left:1858px;top:256px;" width="11" height="6" viewBox="0 0 11 6"><path d="M0 6L5.5 0L11 6Z" fill="#868999"/></svg>
<svg class="r" style="left:1858px;top:934px;" width="11" height="6" viewBox="0 0 11 6"><path d="M0 0L5.5 6L11 0Z" fill="#868999"/></svg>
<div class="r" style="left:1852.5px;top:449px;width:22.5px;height:130px;background:#C2C3C9;"></div>
<div class="r" style="left:1848px;top:329px;width:4px;height:479px;background:#6CE26C;"></div>
<div class="r" style="left:1867px;top:291px;width:13px;height:2px;background:#F6A600;"></div>
<div class="r" style="left:1867px;top:296px;width:13px;height:2px;background:#F6A600;"></div>
<div class="r" style="left:1867px;top:301px;width:13px;height:2px;background:#F6A600;"></div>
<div class="r" style="left:1861px;top:291px;width:6px;height:14px;background:#C2C3C9;"></div>
<div class="r" style="left:1861px;top:293px;width:5px;height:9px;background:#1E8E2C;"></div>
<div class="r" style="left:1861px;top:312px;width:6px;height:7px;background:#B0B0B0;"></div>
<div class="r" style="left:1868px;top:314px;width:12px;height:2px;background:#1E9E1E;"></div>
<div class="r" style="left:1868px;top:326px;width:12px;height:2px;background:#1E9E1E;"></div>
<div class="r" style="left:1868px;top:336.5px;width:12px;height:2px;background:#1E9E1E;"></div>
<div class="r" style="left:1868px;top:346.5px;width:12px;height:2px;background:#1E9E1E;"></div>
<div class="r" style="left:1868px;top:358px;width:12px;height:2px;background:#1E9E1E;"></div>
<div class="r" style="left:1868px;top:381px;width:12px;height:2px;background:#1E9E1E;"></div>
<div class="r" style="left:1868px;top:389.5px;width:12px;height:2px;background:#1E9E1E;"></div>
<div class="r" style="left:1868px;top:428px;width:12px;height:2px;background:#1E9E1E;"></div>
<div class="r" style="left:1868px;top:439px;width:12px;height:2px;background:#1E9E1E;"></div>
<div class="r" style="left:1868px;top:459px;width:12px;height:2px;background:#1E9E1E;"></div>
<div class="r" style="left:1868px;top:478px;width:12px;height:2px;background:#1E9E1E;"></div>
<div class="r" style="left:1868px;top:487px;width:12px;height:2px;background:#1E9E1E;"></div>
<div class="r" style="left:1868px;top:510px;width:12px;height:2px;background:#1E9E1E;"></div>
<div class="r" style="left:1868px;top:533px;width:12px;height:2px;background:#1E9E1E;"></div>
<div class="r" style="left:1868px;top:545.5px;width:12px;height:2px;background:#1E9E1E;"></div>
<div class="r" style="left:1868px;top:570px;width:12px;height:2px;background:#1E9E1E;"></div>
<div class="r" style="left:1846px;top:410px;width:34px;height:2px;background:#00238C;"></div>
<div class="r" style="left:1861px;top:743px;width:6px;height:6px;background:#A0A0A0;"></div>
<div class="r" style="left:1867px;top:745px;width:13px;height:2px;background:#F6A600;"></div>
<div class="r" style="left:1912px;top:128px;width:8px;height:122px;background:#CCCEDB;"></div>
<div class="t s" style="left:1904px;top:128px;font-size:14.5px;line-height:14px;color:#333337;transform-origin:0 0;transform:rotate(90deg);">Unit Test Coverage</div>
<div class="r" style="left:1912px;top:266px;width:8px;height:69px;background:#CCCEDB;"></div>
<div class="t s" style="left:1904px;top:266px;font-size:14.5px;line-height:14px;color:#333337;transform-origin:0 0;transform:rotate(90deg);">Properties</div>
<div class="r" style="left:1912px;top:349px;width:8px;height:113px;background:#CCCEDB;"></div>
<div class="t s" style="left:1904px;top:349px;font-size:14.5px;line-height:14px;color:#333337;transform-origin:0 0;transform:rotate(90deg);">Solution Explorer</div>
<div class="r" style="left:1912px;top:478px;width:8px;height:94px;background:#CCCEDB;"></div>
<div class="t s" style="left:1904px;top:478px;font-size:14.5px;line-height:14px;color:#333337;transform-origin:0 0;transform:rotate(90deg);">Team Explorer</div>
<div class="r" style="left:436px;top:950px;width:1444px;height:22px;background:#EEEEF2;border-bottom:1px solid #CCCEDB;box-sizing:border-box;"></div>
<div class="r" style="left:437px;top:950px;width:74px;height:21px;background:#FFFFFF;border:1px solid #CCCEDB;box-sizing:border-box;"></div>
<div class="t s" style="left:441px;top:952.15px;font-size:14px;line-height:18px;color:#1E1E1E;font-weight:400;">118 %</div>
<svg class="r" style="left:499.5px;top:959.25px;" width="7" height="3.5" viewBox="0 0 7 3.5"><path d="M0 0H7L3.5 3.5Z" fill="#717171"/></svg>
<svg class="r" style="left:543px;top:953px;" width="15" height="15" viewBox="0 0 15 15"><circle cx="7.5" cy="7.5" r="7.2" fill="#E51400"/><path d="M4.5 4.5L10.5 10.5M10.5 4.5L4.5 10.5" stroke="#fff" stroke-width="2"/></svg>
<div class="t s" style="left:565px;top:952.15px;font-size:14px;line-height:18px;color:#1E1E1E;font-weight:400;">0</div>
<svg class="r" style="left:601px;top:953px;" width="15" height="14" viewBox="0 0 15 14"><path d="M7.5 1L14.5 13.5H0.5Z" fill="#FFCC00" stroke="#FFCC00" stroke-linejoin="round"/><path d="M7.5 5V9.5M7.5 10.5V12" stroke="#1E1E1E" stroke-width="1.6"/></svg>
<div class="t s" style="left:621px;top:952.15px;font-size:14px;line-height:18px;color:#1E1E1E;font-weight:400;">2</div>
<svg class="r" style="left:670px;top:954px;" width="15" height="12" viewBox="0 0 15 12"><path d="M14 6H2M6.5 1.5L2 6L6.5 10.5" fill="none" stroke="#00539C" stroke-width="2"/></svg>
<svg class="r" style="left:704px;top:954px;" width="15" height="12" viewBox="0 0 15 12"><path d="M1 6H13M8.5 1.5L13 6L8.5 10.5" fill="none" stroke="#00539C" stroke-width="2"/></svg>
<div class="r" style="left:739px;top:951px;width:1px;height:18px;background:#CCCEDB;"></div>
<svg class="r" style="left:756px;top:952px;" width="17" height="16" viewBox="0 0 17 16"><path d="M2 8L9 2L14 7L7 13Z" fill="#6D6D6D"/><path d="M11 1L16 0L15 5Z" fill="#424242"/><path d="M2 8L7 13L5 15L0 10Z" fill="#9E9E9E"/></svg>
<svg class="r" style="left:779px;top:958px;" width="8" height="5" viewBox="0 0 8 5"><path d="M0 0H8L4 5Z" fill="#1E1E1E"/></svg>
<svg class="r" style="left:5px;top:1019px;" width="21" height="15" viewBox="0 0 21 15"><path d="M5 1.5H19.5L16 13.5H1.5Z" fill="none" stroke="#fff" stroke-width="1.6"/><path d="M7 5H11" stroke="#fff" stroke-width="1.4"/></svg>
<div class="t s" style="left:35px;top:1017.51px;font-size:14.4px;line-height:19px;color:#FFFFFF;font-weight:400;">Test run finished in 486 ms. 1 Total tests - 1 Passed, 0 Failed, 0 Skipped</div>
<div class="t s" style="left:827px;top:1017.47px;font-size:14.5px;line-height:19px;color:#FFFFFF;font-weight:400;">Ln 325</div>
<div class="t s" style="left:941px;top:1017.47px;font-size:14.5px;line-height:19px;color:#FFFFFF;font-weight:400;">Col 22</div>
<div class="t s" style="left:1055px;top:1017.47px;font-size:14.5px;line-height:19px;color:#FFFFFF;font-weight:400;">Ch 22</div>
<div class="t s" style="left:1226px;top:1017.47px;font-size:14.5px;line-height:19px;color:#FFFFFF;font-weight:400;">INS</div>
<svg class="r" style="left:1317px;top:1018px;" width="13" height="16" viewBox="0 0 13 16"><path d="M6.5 15V2M1.5 7L6.5 1.5L11.5 7" fill="none" stroke="#fff" stroke-width="2"/></svg>
<div class="t s" style="left:1339px;top:1017.47px;font-size:14.5px;line-height:19px;color:#FFFFFF;font-weight:400;">0</div>
<svg class="r" style="left:1378px;top:1018px;" width="15" height="15" viewBox="0 0 15 15"><path d="M1 14L2 10L11 1L14 4L5 13Z" fill="#fff"/></svg>
<div class="t s" style="left:1401px;top:1017.47px;font-size:14.5px;line-height:19px;color:#FFFFFF;font-weight:400;">4</div>
<svg class="r" style="left:1438px;top:1017px;" width="18" height="18" viewBox="0 0 18 18"><path d="M9 0.5L17.5 9L9 17.5L0.5 9Z" fill="#fff"/><circle cx="7" cy="6" r="1.5" fill="#007ACC"/><circle cx="11" cy="11" r="1.5" fill="#007ACC"/><path d="M7 6V13M7 6L11 10" stroke="#007ACC" stroke-width="1.2"/></svg>
<div class="t s" style="left:1465px;top:1017.47px;font-size:14.5px;line-height:19px;color:#FFFFFF;font-weight:400;">KL01</div>
<svg class="r" style="left:1524px;top:1017px;" width="18" height="18" viewBox="0 0 18 18"><path d="M9 17V9M9 9L3 3M9 9L15 3" fill="none" stroke="#fff" stroke-width="2.2"/><circle cx="3" cy="3" r="2.2" fill="#fff"/><circle cx="15" cy="3" r="2.2" fill="#fff"/></svg>
<div class="t s" style="left:1551px;top:1018.08px;font-size:14.2px;line-height:18px;color:#FFFFFF;font-weight:400;">KL/04B_NUnit_KL/00_Main</div>
<svg class="r" style="left:1731px;top:1022px;" width="12" height="7" viewBox="0 0 12 7"><path d="M0 7L6 0L12 7Z" fill="#fff"/></svg>
<svg class="r" style="left:1772px;top:1014px;" width="30" height="26" viewBox="0 0 30 26"><path d="M3 18Q5.5 16 5.5 10Q5.5 3 10 3Q14.5 3 14.5 10Q14.5 16 17 18Z" fill="#DCDCE4"/><path d="M8 19.5Q10 22 12 19.5" fill="#BFD9EE"/><circle cx="21" cy="16.5" r="7.3" fill="#E51400"/><text x="21" y="21" font-family="Liberation Sans" font-size="12" font-weight="700" fill="#fff" text-anchor="middle">1</text></svg>
<svg class="r" style="left:1826px;top:1015px;" width="20" height="21" viewBox="0 0 20 21"><path d="M4 6.5H16.5L13.5 16H5.5L2 19.5L2.5 16Z" fill="#1E1E1E" stroke="#fff" stroke-width="1.3" stroke-linejoin="round"/><path d="M11 1L13.5 1L11.5 13L9 13Z" fill="#F6A600"/></svg>
<svg class="r" style="left:1862px;top:1013px;" width="28" height="28" viewBox="0 0 28 28"><circle cx="12.6" cy="12.5" r="10.3" fill="#E8E8EE" stroke="#2D2D30" stroke-width="1.4"/><circle cx="20" cy="20" r="5" fill="#fff"/><circle cx="20" cy="20" r="3.6" fill="#1E1E1E"/><path d="M20 16.4A3.6 3.6 0 0 1 20 23.6Z" fill="#fff"/></svg>
<svg class="r" style="left:1892px;top:1014px;" width="26" height="26" viewBox="0 0 26 26"><circle cx="12.5" cy="12" r="11.2" fill="#2DA12D" stroke="#E0F0E0" stroke-width="1.2"/><path d="M7 12.5L11 17L18 6.5" fill="none" stroke="#fff" stroke-width="2.8"/></svg>
</body></html>
